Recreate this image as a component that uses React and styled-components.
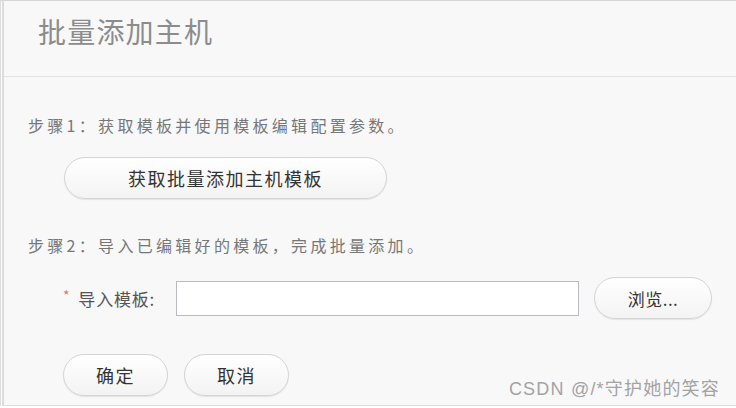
import React from "react";
import styled, { createGlobalStyle } from "styled-components";

const GlobalStyle = createGlobalStyle`
  html, body {
    margin: 0;
    padding: 0;
    background: #ffffff;
  }
  body {
    font-family: "Noto Sans CJK SC", "Liberation Sans", sans-serif;
  }
`;

const Frame = styled.div`
  position: relative;
  height: 406px;
  box-sizing: border-box;
  border-top: 1px solid #d6d6d6;
  border-left: 1px solid #dcdcdc;
  padding-left: 1px;
`;

const Panel = styled.div`
  height: 100%;
  box-sizing: border-box;
  background: #f8f8f8;
  border-left: 2px solid #dcdcdc;
  border-bottom: 1px solid #dedede;
`;

const Header = styled.div`
  height: 76px;
  box-sizing: border-box;
  padding: 15px 0 0 34px;
  border-bottom: 1px solid #e2e2e2;
`;

const Title = styled.h1`
  margin: 0;
  font-size: 28px;
  line-height: 30px;
  font-weight: 400;
  color: #8c8c8c;
  letter-spacing: 1.2px;
`;

const Body = styled.div`
  padding: 38px 0 0 24px;
  display: flex;
  flex-direction: column;
  align-items: flex-start;
`;

const Step = styled.p`
  margin: ${(p) => p.top || 0}px 0 0 0;
  font-size: 16px;
  line-height: 20px;
  color: #777777;
  letter-spacing: 3.3px;
`;

const PillButton = styled.button`
  width: ${(p) => p.w}px;
  height: 42px;
  box-sizing: border-box;
  border: 1px solid #d4d4d4;
  border-radius: 21px;
  background: linear-gradient(#ffffff, #f3f3f3);
  box-shadow: 0 1px 1px rgba(0, 0, 0, 0.08);
  font-family: inherit;
  font-size: ${(p) => p.fs || 18}px;
  letter-spacing: ${(p) => p.ls || 1.5}px;
  color: #333333;
  padding: 0;
  cursor: pointer;
`;

const TemplateButton = styled(PillButton)`
  margin: 22px 0 0 36px;
`;

const Row = styled.div`
  display: flex;
  align-items: center;
  margin-top: ${(p) => p.top}px;
  padding-left: 35px;
  gap: ${(p) => p.gap || 0}px;
`;

const Label = styled.label`
  width: 113px;
  display: flex;
  align-items: center;
  font-size: 17px;
  color: #555555;
  letter-spacing: 0.8px;
`;

const Required = styled.span`
  color: #e8745a;
  font-size: 14px;
  margin-right: 8px;
  position: relative;
  top: -3px;
`;

const FileInput = styled.input`
  width: 403px;
  height: 35px;
  box-sizing: border-box;
  border: 1px solid #b9b9c2;
  background: #ffffff;
  outline: none;
  margin-right: 15px;
`;

const Watermark = styled.div`
  position: absolute;
  right: 16px;
  bottom: 6px;
  font-family: "Liberation Sans", "Noto Sans CJK SC", sans-serif;
  font-size: 18px;
  letter-spacing: 1.2px;
  color: #a3a3a3;
  white-space: nowrap;
`;

export default function App() {
  return (
    <>
      <GlobalStyle />
      <Frame>
        <Panel>
          <Header>
            <Title>批量添加主机</Title>
          </Header>
          <Body>
            <Step>步骤1：获取模板并使用模板编辑配置参数。</Step>
            <TemplateButton w={323}>获取批量添加主机模板</TemplateButton>
            <Step top={36}>步骤2：导入已编辑好的模板，完成批量添加。</Step>
            <Row top={22}>
              <Label>
                <Required>*</Required>导入模板:
              </Label>
              <FileInput type="text" />
              <PillButton w={118} fs={17} ls={0.5}>
                浏览...
              </PillButton>
            </Row>
            <Row top={35} gap={16}>
              <PillButton w={105}>确定</PillButton>
              <PillButton w={105}>取消</PillButton>
            </Row>
          </Body>
        </Panel>
        <Watermark>CSDN @/*守护她的笑容</Watermark>
      </Frame>
    </>
  );
}
